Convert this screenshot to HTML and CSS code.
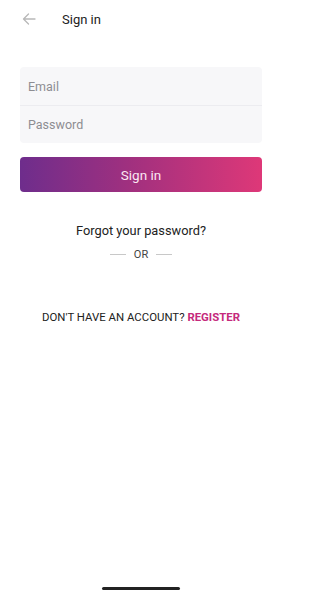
FILE: index.html
```html
<!DOCTYPE html>
<html lang="en">
<head>
<meta charset="utf-8">
<title>Sign in</title>
<link rel="stylesheet" href="styles.css">
</head>
<body>
<div class="screen">
  <header class="topbar">
    <svg class="back" width="14" height="12" viewBox="0 0 14 12" aria-hidden="true">
      <path d="M13 6H1.5M6.5 1L1.5 6l5 5" fill="none" stroke="#b8b8b8" stroke-width="1.3" stroke-linecap="round" stroke-linejoin="round"/>
    </svg>
    <h1 class="title">Sign in</h1>
  </header>
  <main class="content">
    <div class="fields">
      <div class="field">Email</div>
      <div class="field">Password</div>
    </div>
    <button class="signin">Sign in</button>
    <p class="forgot">Forgot your password?</p>
    <div class="or"><span class="line"></span><span>OR</span><span class="line"></span></div>
    <p class="register">DON'T HAVE AN ACCOUNT? <b>REGISTER</b></p>
  </main>
  <div class="home"></div>
</div>
</body>
</html>
```
FILE: styles.css
```css
* { box-sizing: border-box; }
html, body { margin: 0; padding: 0; background: #fff; }
body { font-family: Roboto, "Noto Sans", "Liberation Sans", sans-serif; color: #222; }
.screen { width: 282px; height: 592px; display: flex; flex-direction: column; position: relative; }
.topbar { height: 40px; display: flex; align-items: center; padding-left: 22px; }
.back { display: block; margin-top: -2px; }
.title { margin: 0 0 0 26px; font-size: 13px; font-weight: 400; color: #222; margin-top: -1px; }
.content { padding: 27px 20px 0; display: flex; flex-direction: column; }
.fields { background: #f7f7f9; border-radius: 4px; }
.field { height: 38px; display: flex; align-items: center; padding-left: 8px; font-size: 12.5px; color: #8d8d92; }
.field + .field { border-top: 1px solid #ececf0; }
.signin { margin-top: 14px; height: 35px; border: 0; border-radius: 4px; background: linear-gradient(90deg, #6e2d8c 0%, #a0307f 45%, #de3878 100%); color: #fbe8f2; font-family: inherit; font-size: 13.5px; font-weight: 400; padding: 0; }
.forgot { margin: 30px 0 0; text-align: center; font-size: 12.8px; color: #222; line-height: 17px; }
.or { margin-top: 9px; display: flex; align-items: center; justify-content: center; gap: 8px; font-size: 11px; color: #444; }
.line { width: 16px; height: 1px; background: #c8c8c8; }
.register { margin: 49px 0 0; text-align: center; font-size: 11.4px; color: #222; }
.register b { color: #c52a7c; font-weight: 700; }
.home { position: absolute; left: 102px; bottom: 2px; width: 78px; height: 3px; border-radius: 2px; background: #222; }
```
